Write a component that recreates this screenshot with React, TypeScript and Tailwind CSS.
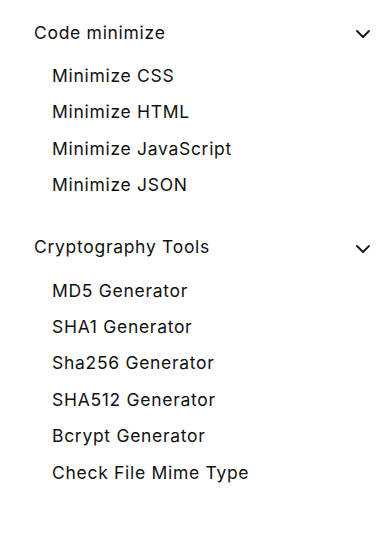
import React from 'react';
import { ChevronDown } from 'lucide-react';

const sections = [
  {
    title: 'Code minimize',
    items: ['Minimize CSS', 'Minimize HTML', 'Minimize JavaScript', 'Minimize JSON'],
  },
  {
    title: 'Cryptography Tools',
    items: [
      'MD5 Generator',
      'SHA1 Generator',
      'Sha256 Generator',
      'SHA512 Generator',
      'Bcrypt Generator',
      'Check File Mime Type',
    ],
  },
];

export default function App() {
  return (
    <div
      className="w-[390px] h-[544px] bg-white text-[#111] pt-[13px] pl-[34px] pr-[15px] flex flex-col gap-6"
      style={{ fontFamily: 'Inter, "Noto Sans", sans-serif' }}
    >
      {sections.map((s) => (
        <div key={s.title}>
          <button className="w-full h-10 flex items-center justify-between text-left text-[17.5px] tracking-[0.7px]">
            <span>{s.title}</span>
            <ChevronDown className="w-6 h-6 mt-[2px]" strokeWidth={1.8} />
          </button>
          <ul className="mt-[5px] pl-[18px]">
            {s.items.map((it) => (
              <li key={it} className="h-[36.4px] flex items-center text-[17.5px] tracking-[0.7px]">
                {it}
              </li>
            ))}
          </ul>
        </div>
      ))}
    </div>
  );
}
